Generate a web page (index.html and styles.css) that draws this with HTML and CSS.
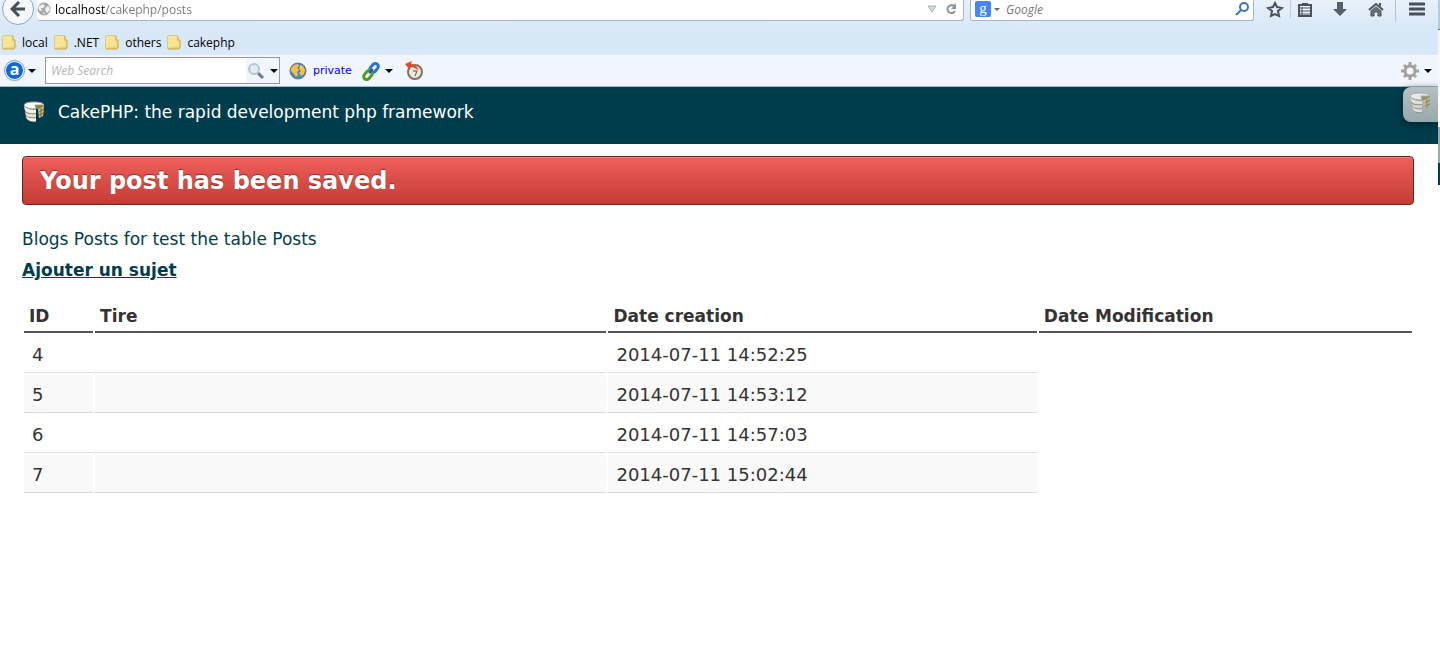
FILE: index.html
```html
<!DOCTYPE html>
<html lang="fr">
<head>
    <meta charset="UTF-8">
    <title>Posts</title>
    <link rel="stylesheet" href="styles.css">
</head>
<body>
<svg class="symbols" aria-hidden="true">
    <symbol id="cake" viewBox="0 0 24 24">
        <path d="M2 6 L4 18 Q7 23 14 22 L14 9 L17 8 L17 18 L21 16 L22 5 Z" fill="#8a8471"/>
        <path d="M2 6 Q5 10 14 10 V13 Q5 14 3 10 Z" fill="#f3f1ea"/>
        <path d="M3 12 Q6 15 14 14 V17 Q6 18 4 15 Z" fill="#e4e1d8"/>
        <path d="M4 16 Q7 19 14 18 V21 Q8 22 5 19 Z" fill="#f3f1ea"/>
        <path d="M16 9 L22 6 L21 16 L17 18 Z" fill="#cfc07c"/>
        <path d="M19 8 V17 M22 9 L17 12 M22 13 L17 15" stroke="#706a4d" fill="none"/>
        <path d="M13 5 L22 6 L16 9 L14 9 Z" fill="#8f8240"/>
        <path d="M2 5 Q3 2 12 2 Q21 2 22 5 L13 5 L14 9 Q3 9 2 5 Z" fill="#fff" stroke="#a3a29b"/>
    </symbol>
    <symbol id="folder" viewBox="0 0 14 15">
        <path d="M1 1 H11 V5 H13 V13 H12 V14 H1 Z" fill="#edd272" stroke="#cdaa45"/>
        <path d="M1 1 H10 V11 L1 13 Z" fill="#f7e495"/>
        <path d="M11 6 V12" stroke="#f9eeb5"/>
    </symbol>
    <symbol id="caret" viewBox="0 0 8 4">
        <path d="M0 0 H8 L4 4 Z" fill="currentColor"/>
    </symbol>
</svg>

<div class="browser">
    <div class="nav-bar">
        <button class="back" aria-label="Back">
            <svg width="16" height="16" viewBox="0 0 16 16"><path d="M9 1 L2 8 L9 15 M3 8 H15" fill="none" stroke="#454e57" stroke-width="3"/></svg>
        </button>
        <div class="field address">
            <svg width="14" height="14" viewBox="0 0 14 14">
                <circle cx="7" cy="7" r="6" fill="#a9a9a9" stroke="#999"/>
                <path d="M2 4 L6 2 L8 4 L6 6 L4 6 L5 9 L3 9 L1 6 Z M9 5 L12 4 L13 8 L10 11 L8 8 Z M6 10 L8 11 L7 13 Z" fill="#f1f1f1"/>
            </svg>
            <input class="url" type="text" aria-label="Address" value="localhost/cakephp/posts">
            <svg width="10" height="8" viewBox="0 0 10 8"><path d="M1 1 H9 L5 7 Z" fill="#d3dade" stroke="#aab4ba"/></svg>
            <button class="icon" aria-label="Reload">
                <svg width="12" height="12" viewBox="0 0 12 12"><path d="M9 3 A4 4 0 1 0 10 8" fill="none" stroke="#87939a" stroke-width="2"/><path d="M11 0 V6 H6 Z" fill="#87939a"/></svg>
            </button>
        </div>
        <div class="field search">
            <span class="google" aria-hidden="true">g</span>
            <svg class="small-caret" width="6" height="3"><use href="#caret"/></svg>
            <input type="text" aria-label="Search" placeholder="Google">
            <button class="icon" aria-label="Go">
                <svg width="14" height="14" viewBox="0 0 14 14"><circle cx="9" cy="5" r="4" fill="none" stroke="#3b75b8" stroke-width="2"/><path d="M6 8 L1 13" stroke="#3b75b8" stroke-width="2"/></svg>
            </button>
        </div>
        <div class="actions">
            <button class="icon" aria-label="Bookmark this page">
                <svg width="18" height="17" viewBox="0 0 18 17"><path d="M9 2 L11 6 L16 7 L12 10 L13 15 L9 13 L5 15 L6 10 L2 7 L7 6 Z" fill="none" stroke="#4a535b" stroke-width="2"/></svg>
            </button>
            <button class="icon bookmarks-menu" aria-label="Bookmarks">
                <svg width="14" height="15" viewBox="0 0 14 15"><path d="M1 3 H13 V14 H1 Z" fill="#f4f7fa" stroke="#4a535b" stroke-width="2"/><path d="M4 1 H10 V4 H4 Z" fill="#4a535b"/><path d="M2 6 H12 M2 9 H12 M2 12 H12 M4 5 V13" stroke="#4a535b"/></svg>
            </button>
            <button class="icon" aria-label="Downloads">
                <svg width="14" height="15" viewBox="0 0 14 15"><path d="M4 0 H10 V7 H14 L7 14 L0 7 H4 Z" fill="#555f66"/></svg>
            </button>
            <button class="icon" aria-label="Home">
                <svg width="16" height="15" viewBox="0 0 16 15"><path d="M1 8 L8 2 L15 8" fill="none" stroke="#4a535b" stroke-width="2"/><path d="M3 9 L8 5 L13 9 V14 H10 V10 H6 V14 H3 Z" fill="#68737a" stroke="#4a535b"/><path d="M11 1 H13 V5 L11 3 Z" fill="#4a535b"/></svg>
            </button>
            <button class="icon menu" aria-label="Menu">
                <svg width="16" height="14" viewBox="0 0 16 14"><path d="M1 2 H15 M1 7 H15 M1 12 H15" stroke="#464f5a" stroke-width="3" stroke-linecap="round"/></svg>
            </button>
        </div>
    </div>

    <div class="bookmarks">
        <a href="#"><svg width="14" height="15"><use href="#folder"/></svg>local</a>
        <a href="#"><svg width="14" height="15"><use href="#folder"/></svg>.NET</a>
        <a href="#"><svg width="14" height="15"><use href="#folder"/></svg>others</a>
        <a href="#"><svg width="14" height="15"><use href="#folder"/></svg>cakephp</a>
    </div>

    <div class="toolbar">
        <button class="icon ask" aria-label="Toolbar menu">
            <span class="ask-logo">a</span>
            <svg width="8" height="4"><use href="#caret"/></svg>
        </button>
        <div class="web-search">
            <input type="text" aria-label="Web Search" placeholder="Web Search">
            <button class="icon" aria-label="Search the web">
                <svg width="18" height="18" viewBox="0 0 18 18"><path d="M11 11 L16 16" stroke="#777" stroke-width="3"/><circle cx="7" cy="7" r="5" fill="#d9effa" stroke="#bcc5cb" stroke-width="2"/></svg>
                <svg width="8" height="4"><use href="#caret"/></svg>
            </button>
        </div>
        <svg class="globe" width="18" height="18" viewBox="0 0 18 18">
            <circle cx="9" cy="9" r="8" fill="#4a86c4" stroke="#6c7680"/>
            <path d="M2 6 L5 3 L9 2 L10 4 L8 6 L10 8 L8 10 L9 13 L7 15 L5 12 L2 9 Z M11 3 L14 4 L16 8 L15 12 L12 14 L10 11 L12 9 L10 7 Z" fill="#f5c142"/>
        </svg>
        <a class="private" href="#">private</a>
        <button class="icon link-menu" aria-label="Links">
            <svg width="20" height="20" viewBox="0 0 20 20" fill="none" stroke-width="3">
                <rect x="10" y="2" width="6" height="10" rx="3" stroke="#2a6fdc" transform="rotate(40 13 7)"/>
                <rect x="4" y="9" width="6" height="10" rx="3" stroke="#4d9d1d" transform="rotate(40 7 14)"/>
                <path d="M8 12 L12 8" stroke="#1e55b8" stroke-width="2"/>
            </svg>
            <svg width="8" height="4"><use href="#caret"/></svg>
        </button>
        <button class="icon" aria-label="History">
            <svg width="20" height="20" viewBox="0 0 20 20"><circle cx="11" cy="11" r="7" fill="#eee8de" stroke="#85705b" stroke-width="2"/><path d="M9 10 H13 L11 15" fill="none" stroke="#555"/><path d="M1 3 L8 0 L7 3 Q13 4 15 10 Q11 6 6 6 L6 9 Z" fill="#e2492a"/></svg>
        </button>
        <button class="icon settings" aria-label="Settings">
            <svg width="20" height="20" viewBox="0 0 20 20" fill="none" stroke="#a3a09e"><circle cx="10" cy="10" r="5" stroke-width="3"/><path d="M10 1 V4 M10 16 V19 M1 10 H4 M16 10 H19 M4 4 L6 6 M14 14 L16 16 M16 4 L14 6 M6 14 L4 16" stroke-width="3"/></svg>
            <svg width="8" height="4"><use href="#caret"/></svg>
        </button>
    </div>
</div>

<header class="header">
    <svg width="24" height="24"><use href="#cake"/></svg>
    <h1><a href="#">CakePHP: the rapid development php framework</a></h1>
    <button class="debug-kit" aria-label="Debug kit"><svg width="24" height="24"><use href="#cake"/></svg></button>
</header>

<main class="content">
    <div class="flash">Your post has been saved.</div>
    <h2>Blogs Posts for test the table Posts</h2>
    <a class="add" href="#">Ajouter un sujet</a>
    <table>
        <colgroup>
            <col class="col-id">
            <col class="col-title">
            <col class="col-created">
            <col class="col-modified">
        </colgroup>
        <thead>
            <tr>
                <th>ID</th>
                <th>Tire</th>
                <th>Date creation</th>
                <th>Date Modification</th>
            </tr>
        </thead>
        <tbody>
            <tr>
                <td>4</td>
                <td></td>
                <td>2014-07-11 14:52:25</td>
            </tr>
            <tr>
                <td>5</td>
                <td></td>
                <td>2014-07-11 14:53:12</td>
            </tr>
            <tr>
                <td>6</td>
                <td></td>
                <td>2014-07-11 14:57:03</td>
            </tr>
            <tr>
                <td>7</td>
                <td></td>
                <td>2014-07-11 15:02:44</td>
            </tr>
        </tbody>
    </table>
</main>
<div class="window-edge"></div>
</body>
</html>
```
FILE: styles.css
```css
* {
    box-sizing: border-box;
}

body {
    margin: 0;
    position: relative;
    background: #fff;
    color: #333;
    font-family: Verdana, "DejaVu Sans", sans-serif;
    font-size: 17px;
}

svg {
    display: block;
    flex: none;
}

.symbols {
    position: absolute;
    width: 0;
    height: 0;
}

/* browser bars */

.browser {
    background: linear-gradient(#e8f1fa, #d9e8f7 28px);
    color: #000;
    font-family: "Segoe UI", "Open Sans", sans-serif;
    font-size: 12px;
}

.browser input {
    flex: 1;
    min-width: 0;
    padding: 0;
    border: 0;
    background: none;
    font: inherit;
    outline: none;
}

.browser input::placeholder {
    font-style: italic;
    color: #777;
}

.icon {
    display: flex;
    align-items: center;
    padding: 0;
    border: 0;
    background: none;
    color: #000;
}

.nav-bar {
    display: flex;
    align-items: flex-start;
    height: 28px;
    padding-right: 15px;
}

.back {
    display: flex;
    align-items: center;
    justify-content: center;
    width: 32px;
    height: 32px;
    margin: -7px 0 0 2px;
    padding: 0;
    border: 1px solid #8fa5b8;
    border-radius: 50%;
    background: #f4f8fc;
}

.field {
    display: flex;
    align-items: center;
    height: 21px;
    padding-bottom: 2px;
    border: 1px solid #a3b7c9;
    border-top: 0;
    border-radius: 0 0 3px 3px;
    background: #fff;
}

.address {
    flex: 1;
    gap: 4px;
    margin-left: 3px;
    padding-right: 6px;
    border-left: 0;
}

.address .icon {
    margin-left: 4px;
}

/* host name dark, path grey */
.browser .url {
    color: transparent;
    background: linear-gradient(to right, #000 50px, #777 50px);
    -webkit-background-clip: text;
    background-clip: text;
}

.search {
    width: 284px;
    margin-left: 6px;
    padding-left: 4px;
    padding-right: 4px;
}

.google {
    width: 16px;
    height: 16px;
    border-radius: 2px;
    background: #4484f3;
    color: #fff;
    font: 15px/14px "Liberation Serif", serif;
    text-align: center;
}

.small-caret {
    margin: 0 6px 0 3px;
    color: #666;
}

.actions {
    display: flex;
    align-items: center;
    height: 18px;
    margin-left: 12px;
}

.bookmarks-menu {
    height: 18px;
    margin: 0 21px 0 6px;
    padding-left: 7px;
    border-left: 1px solid #bccbd9;
}

.actions .icon:nth-child(4) {
    margin-left: 21px;
}

.menu {
    height: 26px;
    margin-left: 11px;
    padding-left: 13px;
    border-left: 1px solid #b3c3d3;
}

.bookmarks {
    display: flex;
    gap: 6px;
    height: 27px;
    padding-top: 1px;
    padding-left: 2px;
}

.bookmarks a {
    display: flex;
    align-items: center;
    gap: 6px;
    color: #000;
    text-decoration: none;
}

.toolbar {
    display: flex;
    align-items: center;
    height: 32px;
    padding: 0 8px 0 5px;
    border-bottom: 1px solid #a5b6c8;
    background: #f1f6fe;
}

.ask,
.link-menu,
.settings {
    gap: 4px;
}

.ask-logo {
    width: 19px;
    height: 19px;
    border: 1px solid #fff;
    border-radius: 50%;
    outline: 1px solid #6d9ed4;
    background: #1268d3;
    color: #fff;
    font: bold 16px/15px "Open Sans", sans-serif;
}

.web-search {
    display: flex;
    width: 235px;
    height: 27px;
    margin-left: 9px;
    padding-left: 5px;
    border: 1px solid #999;
    background: #fff;
}

.browser .web-search input::placeholder {
    color: #b5b5b5;
}

.web-search .icon {
    gap: 5px;
    padding: 0 1px;
    background: #f1f6fe;
}

.globe {
    margin: 0 6px 0 9px;
}

.private {
    color: #00f;
    font: 11px "DejaVu Sans", sans-serif;
    text-decoration: none;
}

.link-menu {
    margin: 0 11px 0 9px;
}

.settings {
    margin-left: auto;
}

/* page */

.header {
    display: flex;
    align-items: center;
    gap: 12px;
    position: relative;
    height: 57px;
    padding: 0 22px 8px;
    background: #003d4c;
}

.header h1 {
    margin: 0;
    font-size: 17px;
    font-weight: normal;
}

.header a {
    color: #fff;
    text-decoration: none;
}

.debug-kit {
    position: absolute;
    top: 0;
    right: 2px;
    width: 35px;
    height: 35px;
    padding: 0 5px 3px;
    border: 0;
    border-radius: 8px 0 0 8px;
    background: linear-gradient(#b5c0c3, #98a8ac);
    box-shadow: 0 3px 8px #00252f;
}

.debug-kit svg {
    opacity: 0.7;
}

.content {
    padding: 12px 26px 24px 22px;
}

.flash {
    padding: 1px 17px 0;
    border: 1px solid #6b2322;
    border-radius: 4px;
    background: linear-gradient(#ee5f5b, #c43c35);
    box-shadow: inset 0 1px 0 rgba(255, 255, 255, 0.25);
    color: #fff;
    font-size: 24px;
    font-weight: bold;
    line-height: 46px;
    text-shadow: 0 -1px 1px rgba(0, 0, 0, 0.4);
}

h2 {
    margin: 20px 0 0;
    color: #003d4c;
    font-size: 17px;
    font-weight: normal;
    line-height: 28px;
}

.add {
    display: inline-block;
    margin-top: 3px;
    color: #003d4c;
    font-weight: bold;
    line-height: 28px;
}

table {
    width: 100%;
    margin-top: 14px;
    table-layout: fixed;
    border-spacing: 2px;
}

.col-id {
    width: 5%;
}

.col-title {
    width: 37%;
}

.col-created {
    width: 31%;
}

.col-modified {
    width: 27%;
}

th {
    height: 33px;
    padding: 0 5px;
    border-bottom: 2px solid #555;
    text-align: left;
}

td {
    height: 38px;
    padding: 1px 8px 0;
    border-bottom: 1px solid #ddd;
    font-size: 18px;
}

tbody tr:nth-child(even) td {
    background: #f9f9f9;
}

/* sliver of the window behind */
.window-edge {
    position: absolute;
    top: 0;
    right: 0;
    width: 2px;
    height: 185px;
    background: linear-gradient(#b5cbe3 29px, #667789 29px 30px, #f4f8fd 30px 96px, #fff 96px 127px, #9aa8ab 127px 163px, #003d4c 163px);
}
```
